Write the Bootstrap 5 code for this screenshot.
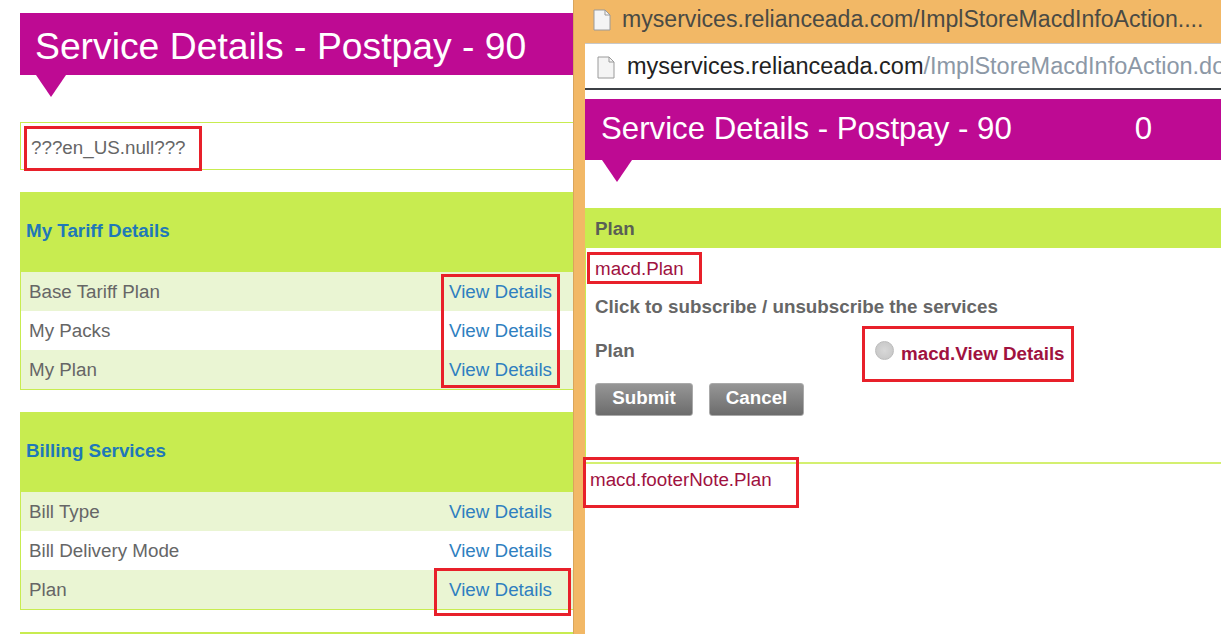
<!DOCTYPE html>
<html lang="en">
<head>
  <meta charset="UTF-8" />
  <title>Service Details</title>
  <link href="https://cdn.jsdelivr.net/npm/bootstrap@5.3.0/dist/css/bootstrap.min.css" rel="stylesheet" />
  <style>
    html, body { height: 634px; overflow: hidden; }
    body { font-family: "Liberation Sans", Arial, sans-serif; color: #666; background: #fff; font-size: 18.8px; }
    .left-pane { width: 573px; height: 634px; padding: 13px 0 0 20px; flex: none; overflow: hidden; }
    .popup-win { flex: 1 1 auto; min-width: 0; height: 634px; background: #f2b866; padding-left: 11px; border-left: 1px solid #d9a55c; overflow: hidden; }
    .win-title { height: 43px; padding: 0 0 4px 8px; gap: 11px; font-size: 23.1px; color: #4a4a44; white-space: nowrap; }
    .addr-bar { height: 47px; background: #fff; padding: 2px 0 0 12px; gap: 12px; font-size: 23.5px; color: #222; white-space: nowrap; border-top: 1px solid #c8c8c8; border-bottom: 2px solid #3c4045; overflow: hidden; }
    .addr-bar span { color: #8c98a6; }
    .popup-body { height: 544px; background: #fff; padding-top: 9px; }
    .title-band { height: 62px; background: #be0a93; color: #fff; font-size: 37.3px; line-height: 67px; padding-left: 15px; white-space: nowrap; position: relative; }
    .title-band::after { content: ""; position: absolute; left: 16px; top: 62px; border-style: solid; border-width: 22px 15px 0; border-color: #be0a93 transparent transparent; }
    .popup-body .title-band { height: 61px; font-size: 31.2px; line-height: 59px; padding-left: 16px; }
    .popup-body .title-band b { font-weight: 400; margin-left: 123px; }
    .popup-body .title-band::after { top: 61px; left: 17px; }
    .note-box { height: 48px; margin-top: 47px; border: 1px solid #c8ec50; border-right: 0; line-height: 49px; padding-left: 10px; }
    .tariff-group { margin-top: 22px; border-bottom: 1px solid #c8ec50; border-left: 1px solid #c8ec50; }
    .group-head { height: 80px; background: #c8ec50; color: #1f78b8; font-weight: 700; margin-left: -1px; padding: 0 0 2px 6px; }
    .tariff-row { height: 39px; padding: 1px 21px 0 8px; }
    .tariff-row:nth-child(odd) { background: #eaf5d3; }
    .tariff-row a { color: #2f7fc0; text-decoration: none; }
    .plan-bar { height: 40px; margin-top: 48px; background: #c8ec50; font-weight: 700; padding: 2px 0 0 10px; color: #5a5f55; }
    .popup-form { height: 214px; border-left: 1px solid #c8ec50; padding-left: 9px; }
    .macd-text { color: #a0123f; }
    .macd-first { padding-top: 9px; line-height: 24px; }
    .form-line { font-weight: 700; color: #666; line-height: 24px; margin-top: 14px; }
    .plan-label { width: 280px; margin-top: -5px; }
    .plan-row { margin-top: 18px; height: 32px; }
    .grey-btn { width: 98px; height: 33px; padding: 0 0 3px; background: linear-gradient(#969696, #6c6c6c); color: #fff; font-size: 18.8px; font-weight: 700; border: 1px solid #aaa; border-radius: 3px; }
    .grey-btn.wide { width: 95px; margin-left: 16px; }
    .btn-line { margin-top: 14px; }
    .fake-radio { width: 19px; height: 19px; flex: none; border-radius: 50%; border: 1px solid #bbb; background: radial-gradient(#d8d8d8, #c4c4c4); margin: -6px 7px 0 0; }
    .choice-label { padding-top: 1px; }
    .footer-note { border-top: 2px solid #d4f070; padding: 4px 0 0 5px; line-height: 24px; }
    .red-box { position: absolute; border: 3px solid #e8202a; pointer-events: none; }
    .rb-note { left: 24px; top: 126px; width: 178px; height: 45px; }
    .rb-views { left: 441px; top: 274px; width: 119px; height: 114px; }
    .rb-plan { left: 434px; top: 568px; width: 137px; height: 48px; }
    .rb-macd { left: 587px; top: 252px; width: 115px; height: 32px; }
    .rb-radio { left: 862px; top: 326px; width: 212px; height: 56px; }
    .rb-foot { left: 583px; top: 457px; width: 216px; height: 51px; }
    .group-next { height: 2px; margin-top: 22px; background: #c8ec50; }
  </style>
</head>
<body>
  <div class="d-flex position-relative">
    <div class="left-pane">
      <div class="title-band">Service Details - Postpay - 90</div>
      <div class="note-box">???en_US.null???</div>

      <div class="tariff-group">
        <div class="group-head d-flex align-items-center">My Tariff Details</div>
        <div>
          <div class="tariff-row d-flex align-items-center justify-content-between"><span>Base Tariff Plan</span><a href="#">View Details</a></div>
          <div class="tariff-row d-flex align-items-center justify-content-between"><span>My Packs</span><a href="#">View Details</a></div>
          <div class="tariff-row d-flex align-items-center justify-content-between"><span>My Plan</span><a href="#">View Details</a></div>
        </div>
      </div>

      <div class="tariff-group">
        <div class="group-head d-flex align-items-center">Billing Services</div>
        <div>
          <div class="tariff-row d-flex align-items-center justify-content-between"><span>Bill Type</span><a href="#">View Details</a></div>
          <div class="tariff-row d-flex align-items-center justify-content-between"><span>Bill Delivery Mode</span><a href="#">View Details</a></div>
          <div class="tariff-row d-flex align-items-center justify-content-between"><span>Plan</span><a href="#">View Details</a></div>
        </div>
      </div>
      <div class="group-next"></div>
    </div>

    <div class="popup-win">
      <div class="win-title d-flex align-items-center">
        <svg width="18" height="22" viewBox="0 0 18 22" class="flex-shrink-0"><path d="M1 1h11l5 5v15H1z" fill="#f4f4f4" stroke="#9a9a9a"/><path d="M12 1v5h5" fill="none" stroke="#9a9a9a"/></svg>
        <div>myservices.relianceada.com/ImplStoreMacdInfoAction....</div>
      </div>
      <div class="addr-bar d-flex align-items-center">
        <svg width="18" height="23" viewBox="0 0 18 23" class="flex-shrink-0"><path d="M1 1h11l5 5v16H1z" fill="#f4f4f4" stroke="#9a9a9a"/><path d="M12 1v5h5" fill="none" stroke="#9a9a9a"/></svg>
        <div>myservices.relianceada.com<span>/ImplStoreMacdInfoAction.do</span></div>
      </div>
      <div class="popup-body">
        <div class="title-band">Service Details - Postpay - 90<b>0</b></div>
        <div class="plan-bar d-flex align-items-center">Plan</div>
        <div class="popup-form">
          <div class="macd-text macd-first">macd.Plan</div>
          <div class="form-line">Click to subscribe / unsubscribe the services</div>
          <div class="d-flex form-line plan-row align-items-center">
            <div class="plan-label">Plan</div>
            <div class="d-flex align-items-center macd-text choice-label"><span class="fake-radio"></span>macd.View Details</div>
          </div>
          <div class="d-flex btn-line">
            <button type="button" class="btn grey-btn">Submit</button>
            <button type="button" class="btn grey-btn wide">Cancel</button>
          </div>
        </div>
        <div class="footer-note macd-text">macd.footerNote.Plan</div>
      </div>
    </div>

    <div class="red-box rb-note"></div>
    <div class="red-box rb-views"></div>
    <div class="red-box rb-plan"></div>
    <div class="red-box rb-macd"></div>
    <div class="red-box rb-radio"></div>
    <div class="red-box rb-foot"></div>
  </div>
</body>
</html>
